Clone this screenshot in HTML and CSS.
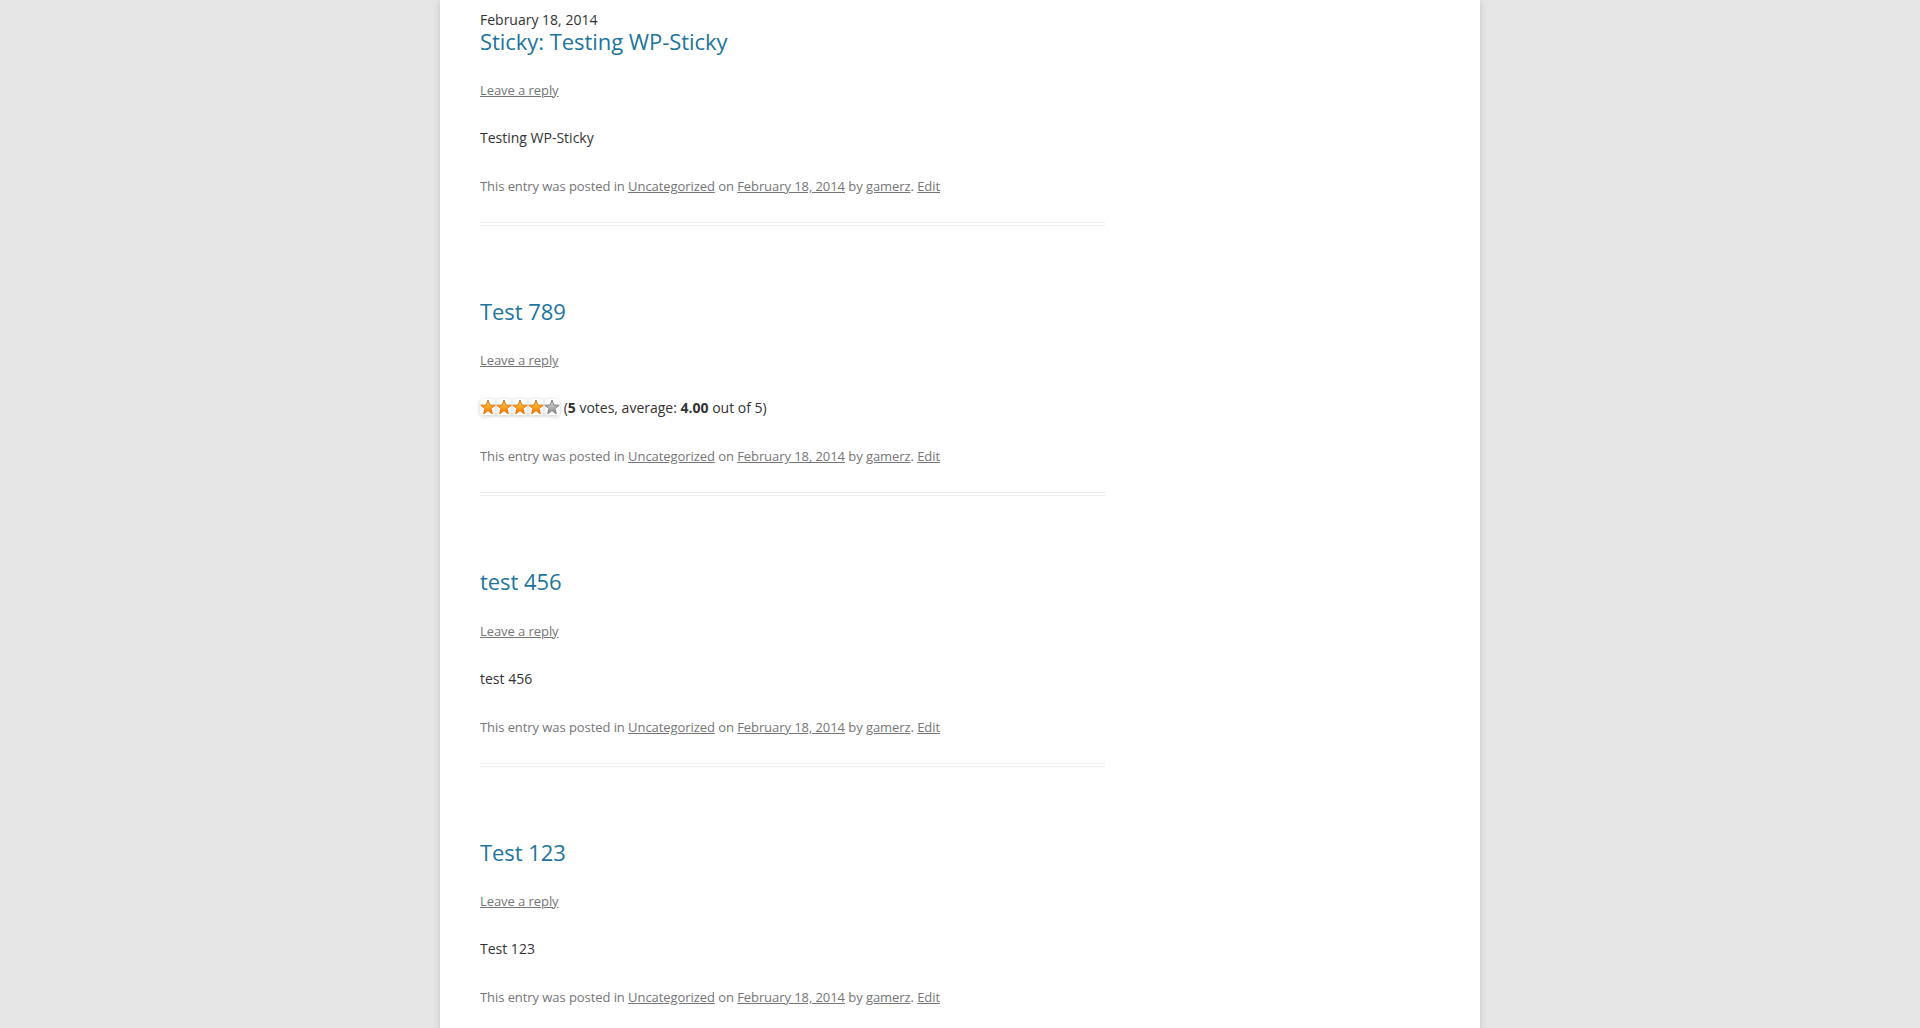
FILE: index.html
```html
<!DOCTYPE html>
<html lang="en">
<head>
<meta charset="utf-8">
<title>Blog</title>
<link rel="stylesheet" href="styles.css">
</head>
<body>
<svg class="defs" width="0" height="0" aria-hidden="true">
  <defs>
    <linearGradient id="gOn" x1="0" y1="0" x2="0" y2="1">
      <stop offset="0" stop-color="#ffe07a"/>
      <stop offset="0.5" stop-color="#ffa51f"/>
      <stop offset="1" stop-color="#f27a00"/>
    </linearGradient>
    <linearGradient id="gOff" x1="0" y1="0" x2="0" y2="1">
      <stop offset="0" stop-color="#e2e2e2"/>
      <stop offset="0.5" stop-color="#b5b5b5"/>
      <stop offset="1" stop-color="#8d8d8d"/>
    </linearGradient>
  </defs>
</svg>
<div class="site">
  <main class="site-content">
    <article class="post sticky">
      <header class="entry-header">
        <div class="sticky-date">February 18, 2014</div>
        <h1 class="entry-title"><a href="#">Sticky: Testing WP-Sticky</a></h1>
        <div class="comments-link"><a href="#">Leave a reply</a></div>
      </header>
      <div class="entry-content"><p>Testing WP-Sticky</p></div>
      <footer class="entry-meta">This entry was posted in <a href="#">Uncategorized</a> on <a href="#">February 18, 2014</a> by <a href="#">gamerz</a>. <a href="#">Edit</a></footer>
    </article>

    <article class="post">
      <header class="entry-header">
        <h1 class="entry-title"><a href="#">Test 789</a></h1>
        <div class="comments-link"><a href="#">Leave a reply</a></div>
      </header>
      <div class="entry-content"><p><span class="stars"><svg class="star" viewBox="0 0 16 16"><path d="M8 1 L9.82 6.09 L15.23 6.25 L10.95 9.56 L12.47 14.75 L8 11.7 L3.53 14.75 L5.05 9.56 L0.77 6.25 L6.18 6.09 Z" fill="url(#gOn)" stroke="#d96c00" stroke-width="0.9" stroke-linejoin="round"/></svg><svg class="star" viewBox="0 0 16 16"><path d="M8 1 L9.82 6.09 L15.23 6.25 L10.95 9.56 L12.47 14.75 L8 11.7 L3.53 14.75 L5.05 9.56 L0.77 6.25 L6.18 6.09 Z" fill="url(#gOn)" stroke="#d96c00" stroke-width="0.9" stroke-linejoin="round"/></svg><svg class="star" viewBox="0 0 16 16"><path d="M8 1 L9.82 6.09 L15.23 6.25 L10.95 9.56 L12.47 14.75 L8 11.7 L3.53 14.75 L5.05 9.56 L0.77 6.25 L6.18 6.09 Z" fill="url(#gOn)" stroke="#d96c00" stroke-width="0.9" stroke-linejoin="round"/></svg><svg class="star" viewBox="0 0 16 16"><path d="M8 1 L9.82 6.09 L15.23 6.25 L10.95 9.56 L12.47 14.75 L8 11.7 L3.53 14.75 L5.05 9.56 L0.77 6.25 L6.18 6.09 Z" fill="url(#gOn)" stroke="#d96c00" stroke-width="0.9" stroke-linejoin="round"/></svg><svg class="star" viewBox="0 0 16 16"><path d="M8 1 L9.82 6.09 L15.23 6.25 L10.95 9.56 L12.47 14.75 L8 11.7 L3.53 14.75 L5.05 9.56 L0.77 6.25 L6.18 6.09 Z" fill="url(#gOff)" stroke="#777" stroke-width="0.9" stroke-linejoin="round"/></svg></span> (<strong>5</strong> votes, average: <strong>4.00</strong> out of 5)</p></div>
      <footer class="entry-meta">This entry was posted in <a href="#">Uncategorized</a> on <a href="#">February 18, 2014</a> by <a href="#">gamerz</a>. <a href="#">Edit</a></footer>
    </article>

    <article class="post">
      <header class="entry-header">
        <h1 class="entry-title"><a href="#">test 456</a></h1>
        <div class="comments-link"><a href="#">Leave a reply</a></div>
      </header>
      <div class="entry-content"><p>test 456</p></div>
      <footer class="entry-meta">This entry was posted in <a href="#">Uncategorized</a> on <a href="#">February 18, 2014</a> by <a href="#">gamerz</a>. <a href="#">Edit</a></footer>
    </article>

    <article class="post">
      <header class="entry-header">
        <h1 class="entry-title"><a href="#">Test 123</a></h1>
        <div class="comments-link"><a href="#">Leave a reply</a></div>
      </header>
      <div class="entry-content"><p>Test 123</p></div>
      <footer class="entry-meta">This entry was posted in <a href="#">Uncategorized</a> on <a href="#">February 18, 2014</a> by <a href="#">gamerz</a>. <a href="#">Edit</a></footer>
    </article>
  </main>
</div>
</body>
</html>
```
FILE: styles.css
```css
html, body {
  margin: 0;
  padding: 0;
  height: 100%;
  overflow: hidden;
  background: #e6e6e6;
}

body {
  font-family: "Open Sans", Helvetica, Arial, sans-serif;
  font-size: 14px;
  color: #444;
}

.defs {
  position: absolute;
  width: 0;
  height: 0;
}

.site {
  max-width: 960px;
  margin: 0 auto;
  padding: 11.6px 40px 0;
  min-height: 1100px;
  background: #fff;
  box-shadow: rgba(100, 100, 100, 0.3) 0 2px 6px;
}

.site-content {
  width: 625px;
  display: block;
}

.post {
  margin-bottom: 72px;
  padding-bottom: 24px;
  border-bottom: 4px double #ededed;
}

.entry-header {
  margin-bottom: 24px;
}

.sticky-date {
  font-size: 14px;
  line-height: 16px;
  color: #333;
}

.entry-title {
  margin: 0;
  font-size: 22px;
  line-height: 1.2;
  font-weight: normal;
  letter-spacing: -0.05px;
}

.entry-title a {
  color: #21759b;
  text-decoration: none;
}

.comments-link {
  margin-top: 24px;
  font-size: 13px;
  line-height: 24px;
  color: #757575;
  letter-spacing: -0.07px;
}

.comments-link a,
.entry-meta a {
  color: #757575;
  text-decoration: underline;
}

.entry-content p {
  margin: 0;
  line-height: 24px;
  color: #333;
}

.entry-meta {
  margin-top: 24px;
  font-size: 13px;
  line-height: 24px;
  color: #757575;
  letter-spacing: -0.07px;
}

.stars {
  display: inline-flex;
  vertical-align: -2px;
}

.star {
  width: 16px;
  height: 16px;
  display: block;
  border-radius: 3px;
  box-shadow: 0 1px 4px rgba(0, 0, 0, 0.2);
}
```
